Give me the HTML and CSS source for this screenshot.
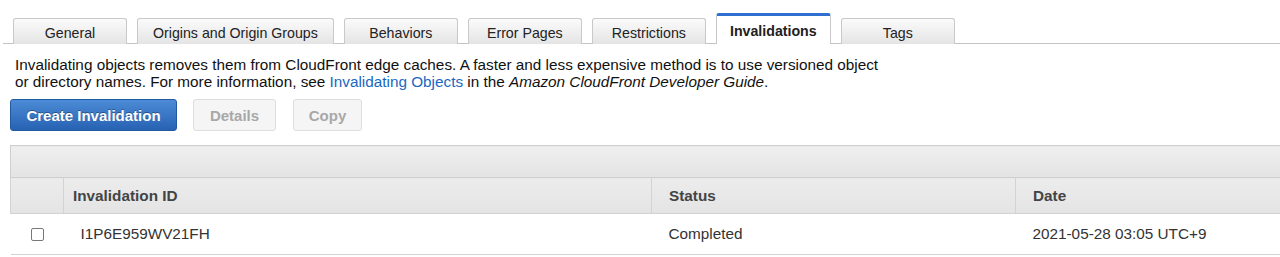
FILE: index.html
```html
<!DOCTYPE html>
<html lang="en">
<head>
    <meta charset="UTF-8">
    <title>CloudFront Distribution - Invalidations</title>
    <link rel="stylesheet" href="styles.css">
</head>
<body>
    <ul class="tabs">
        <li class="tab">General</li>
        <li class="tab wide">Origins and Origin Groups</li>
        <li class="tab">Behaviors</li>
        <li class="tab">Error Pages</li>
        <li class="tab">Restrictions</li>
        <li class="tab active">Invalidations</li>
        <li class="tab">Tags</li>
    </ul>

    <p class="intro">
        Invalidating objects removes them from CloudFront edge caches. A faster and less expensive method is to use versioned object<br>
        or directory names. For more information, see <a href="#">Invalidating Objects</a> in the <em>Amazon CloudFront Developer Guide</em>.
    </p>

    <div class="actions">
        <button class="btn primary">Create Invalidation</button>
        <button class="btn details" disabled>Details</button>
        <button class="btn copy" disabled>Copy</button>
    </div>

    <table class="grid">
        <colgroup>
            <col class="col-check">
            <col class="col-id">
            <col class="col-status">
            <col>
        </colgroup>
        <thead>
            <tr class="toolbar"><th colspan="4"></th></tr>
            <tr class="head">
                <th></th>
                <th class="id-head">Invalidation ID</th>
                <th>Status</th>
                <th>Date</th>
            </tr>
        </thead>
        <tbody>
            <tr>
                <td class="check"><input type="checkbox"></td>
                <td class="id-cell">I1P6E959WV21FH</td>
                <td>Completed</td>
                <td>2021-05-28 03:05 UTC+9</td>
            </tr>
        </tbody>
    </table>
</body>
</html>
```

FILE: styles.css
```css
:root {
    --text-color: #222;
    --link-color: #1a67c2;
}

* {
    margin: 0;
    padding: 0;
    box-sizing: border-box;
}

body {
    font-family: 'Liberation Sans', Arial, sans-serif;
    font-size: 15.3px;
    color: var(--text-color);
    background: #fff;
    overflow: hidden;
}

/* tabs */
.tabs {
    display: flex;
    align-items: flex-end;
    gap: 10px;
    list-style: none;
    margin-left: 3px;
    padding: 13px 0 0 10px;
    border-bottom: 1px solid #c4c4c4;
    font-size: 14.2px;
}

.tab {
    min-width: 114px;
    height: 26px;
    padding: 1px 13px 0;
    line-height: 26px;
    text-align: center;
    color: #222;
    background: linear-gradient(#fbfbfb, #e4e4e4);
    border: 1px solid #c9c9c9;
    border-bottom: none;
    border-radius: 3px 3px 0 0;
    margin-bottom: -1px;
}

.tab.wide {
    padding: 1px 15px 0;
}

.tab.active {
    height: 31px;
    min-width: 115px;
    padding-top: 2px;
    background: #fff;
    font-weight: bold;
    border-top: 3px solid #2e6fcf;
}

.intro {
    margin: 12px 0 0 15px;
    line-height: 17px;
    color: #111;
}

.intro a {
    color: var(--link-color);
    text-decoration: none;
}

/* buttons */
.actions {
    display: flex;
    gap: 16px;
    margin: 9px 0 0 10px;
}

.btn {
    height: 32px;
    padding: 0 10px;
    font-family: inherit;
    font-size: 15px;
    font-weight: bold;
    border-radius: 3px;
    border: 1px solid #dedede;
    background: #f5f5f5;
    color: #a8a8a8;
}

.btn.primary {
    width: 167px;
    color: #fff;
    background: linear-gradient(#4c8bd6, #2762b3);
    border-color: #2358a3;
    text-shadow: 0 -1px 0 rgba(0, 0, 0, 0.35);
}

.btn.details {
    width: 83px;
}

.btn.copy {
    width: 69px;
    margin-left: 1px;
}

/* table */
.grid {
    margin: 14px 0 0 10px;
    width: 1300px;
    table-layout: fixed;
    border-collapse: collapse;
}

.col-check { width: 53px; }
.col-id { width: 588px; }
.col-status { width: 364px; }

.toolbar th {
    height: 32px;
    background: linear-gradient(#efefef, #e3e3e3);
    border: 1px solid #cfcfcf;
}

.head th {
    height: 36px;
    padding-left: 17px;
    text-align: left;
    font-weight: bold;
    color: #444;
    background: linear-gradient(#ececec, #e4e4e4);
    border: 1px solid #d3d3d3;
    border-top: none;
}

.head th.id-head {
    padding-left: 9px;
}

td {
    height: 41px;
    padding-left: 17px;
    color: #333;
    border-bottom: 1px solid #d3d3d3;
}

td.check {
    padding-left: 20px;
}

td.check input {
    appearance: none;
    display: block;
    width: 13px;
    height: 13px;
    border: 1px solid #777;
    border-radius: 2px;
    background: #fff;
}
```
